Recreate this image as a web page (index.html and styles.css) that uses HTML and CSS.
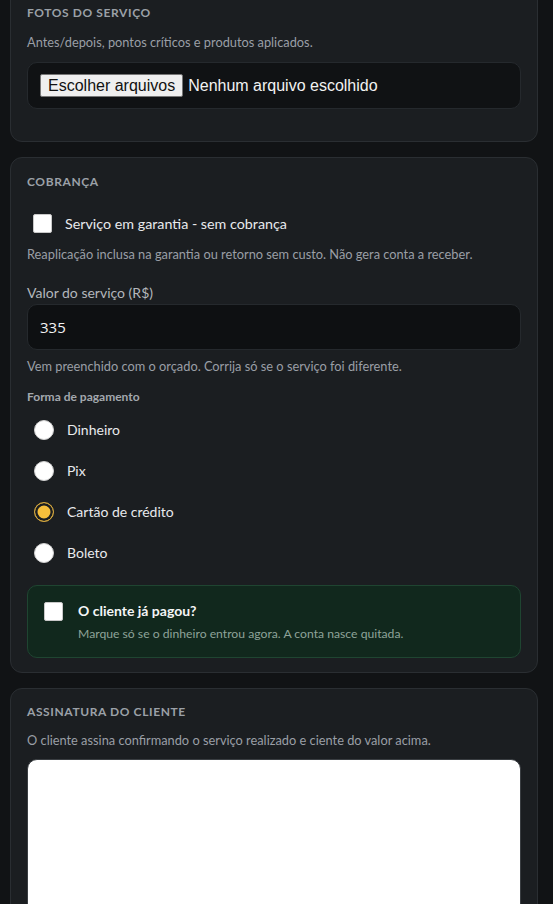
FILE: index.html
```html
<!DOCTYPE html>
<html lang="pt-BR">
<head>
<meta charset="utf-8">
<title>Serviço</title>
<link rel="stylesheet" href="styles.css">
</head>
<body>
<main class="page">
  <section class="card card-fotos">
    <h2 class="card-title">Fotos do serviço</h2>
    <p class="help help-fotos">Antes/depois, pontos críticos e produtos aplicados.</p>
    <div class="file-box">
      <span class="file-btn">Escolher arquivos</span>
      <span class="file-name">Nenhum arquivo escolhido</span>
    </div>
  </section>

  <section class="card">
    <h2 class="card-title">Cobrança</h2>
    <label class="check-row">
      <input type="checkbox" class="check">
      <span>Serviço em garantia - sem cobrança</span>
    </label>
    <p class="help help-check">Reaplicação inclusa na garantia ou retorno sem custo. Não gera conta a receber.</p>

    <label class="field-label" for="valor">Valor do serviço (R$)</label>
    <input id="valor" class="text-input" type="text" value="335">
    <p class="help help-input">Vem preenchido com o orçado. Corrija só se o serviço foi diferente.</p>

    <div class="group-label">Forma de pagamento</div>
    <div class="radios">
      <label class="radio-row"><input type="radio" name="pg" class="radio"><span>Dinheiro</span></label>
      <label class="radio-row"><input type="radio" name="pg" class="radio"><span>Pix</span></label>
      <label class="radio-row"><input type="radio" name="pg" class="radio" checked><span>Cartão de crédito</span></label>
      <label class="radio-row"><input type="radio" name="pg" class="radio"><span>Boleto</span></label>
    </div>

    <label class="paid-box">
      <input type="checkbox" class="check">
      <span class="paid-text">
        <strong class="paid-title">O cliente já pagou?</strong>
        <span class="paid-sub">Marque só se o dinheiro entrou agora. A conta nasce quitada.</span>
      </span>
    </label>
  </section>

  <section class="card card-sign">
    <h2 class="card-title">Assinatura do cliente</h2>
    <p class="help help-top">O cliente assina confirmando o serviço realizado e ciente do valor acima.</p>
    <div class="sign-pad"></div>
  </section>
</main>
</body>
</html>
```

FILE: styles.css
```css
* { box-sizing: border-box; }

html, body {
  margin: 0;
  padding: 0;
  background: #111315;
  overflow: hidden;
}

body {
  font-family: Lato, "Open Sans", sans-serif;
  color: #e8eaed;
}

.page {
  display: flex;
  flex-direction: column;
  gap: 15px;
  padding: 0 15px 0 10px;
  margin-top: -12px;
}

.card {
  background: #1b1e21;
  border: 1px solid #2a2e32;
  border-radius: 12px;
  padding: 16px 16px 14px;
}

.card-fotos {
  padding-bottom: 32px;
}

.card-sign {
  padding-top: 15px;
}

.card-title {
  margin: 0;
  font-size: 12px;
  line-height: 16px;
  font-weight: 700;
  letter-spacing: 0.6px;
  text-transform: uppercase;
  color: #9ba1a8;
}

.help {
  margin: 0;
  font-size: 12.8px;
  line-height: 18px;
  color: #9a9fa6;
}

.help-fotos { margin-top: 12px; }
.help-top { margin-top: 11px; }
.help-check { margin-top: 12px; }
.help-input { margin-top: 7px; }

.file-box {
  margin-top: 11px;
  height: 47px;
  display: flex;
  align-items: center;
  gap: 5px;
  padding: 0 12px;
  background: #101214;
  border: 1px solid #25292d;
  border-radius: 10px;
  font-family: "Liberation Sans", Arial, sans-serif;
  font-size: 16px;
}

.file-btn {
  height: 23px;
  line-height: 21px;
  padding: 0 7px;
  background: #efefef;
  color: #111;
  border: 1px solid #767676;
  border-radius: 2px;
}

.file-name { color: #f2f2f2; }

.check {
  appearance: none;
  -webkit-appearance: none;
  margin: 0;
  width: 19px;
  height: 19px;
  flex: none;
  background: #fff;
  border: 1px solid #c8c8c8;
  border-radius: 2px;
}

.check-row {
  margin-top: 23px;
  margin-left: 6px;
  display: flex;
  align-items: center;
  gap: 13px;
  height: 20px;
  font-size: 14.3px;
  color: #e8eaed;
}

.field-label {
  display: block;
  margin-top: 20px;
  font-size: 14px;
  line-height: 20px;
  color: #b3b7bc;
}

.text-input {
  display: block;
  width: 100%;
  height: 46px;
  margin: 1px 0 0;
  padding: 0 12px;
  background: #0e1012;
  border: 1px solid #25292d;
  border-radius: 10px;
  color: #f2f2f2;
  font-family: "Open Sans", Lato, sans-serif;
  font-size: 15px;
  outline: none;
}

.group-label {
  margin-top: 14px;
  font-size: 12px;
  line-height: 16px;
  font-weight: 700;
  color: #a3a8ae;
}

.radios {
  margin-top: 4px;
  display: flex;
  flex-direction: column;
}

.radio-row {
  height: 41px;
  display: flex;
  align-items: center;
  gap: 13px;
  padding-left: 7px;
  font-size: 14px;
  color: #e8eaed;
}

.radio {
  appearance: none;
  -webkit-appearance: none;
  margin: 0;
  width: 20px;
  height: 20px;
  flex: none;
  border-radius: 50%;
  background: #fff;
  border: 1px solid #d0d0d0;
}

.radio:checked {
  background: #f6bf3c;
  border: 1.5px solid #d2a640;
  box-shadow: inset 0 0 0 2.5px #1b1e21;
}

.paid-box {
  margin-top: 12px;
  display: flex;
  align-items: flex-start;
  gap: 15px;
  padding: 15px 16px 14px;
  background: #11281d;
  border: 1px solid #1f4531;
  border-radius: 10px;
}

.paid-box .check { margin-top: 1px; }

.paid-text {
  display: flex;
  flex-direction: column;
  gap: 4px;
}

.paid-title {
  font-size: 14px;
  line-height: 20px;
  font-weight: 700;
  color: #f4f5f6;
}

.paid-sub {
  font-size: 12.2px;
  line-height: 18px;
  color: #8ea399;
}

.sign-pad {
  margin-top: 10px;
  height: 200px;
  background: #fff;
  border: 1px solid #3a3e42;
  border-radius: 10px;
}
```
